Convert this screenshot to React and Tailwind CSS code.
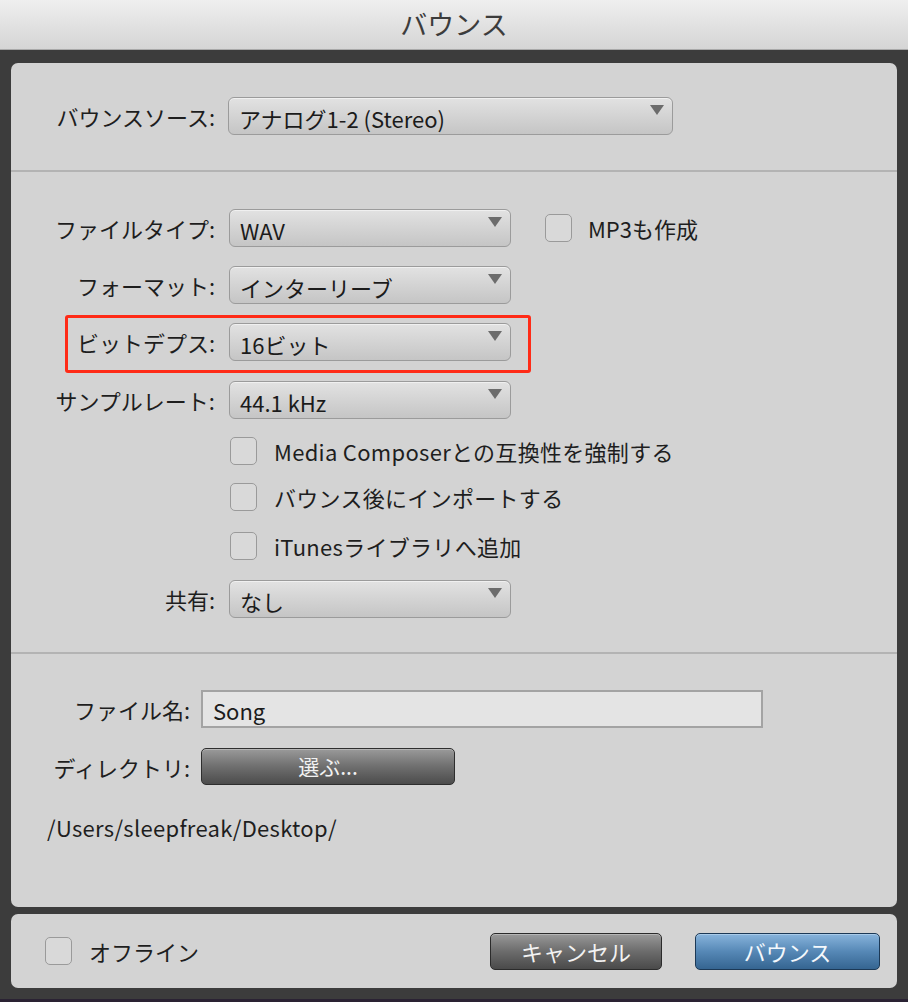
import React from "react";

function Arrow() {
  return (
    <svg width="14" height="10" viewBox="0 0 14 10" className="absolute right-[8px] top-[7px]">
      <path d="M0 0 H14 L7 10 Z" fill="#6c6c6c" />
    </svg>
  );
}

function Select({ value, width }) {
  return (
    <div
      className={`relative flex h-[38px] items-center rounded-[6px] border border-[#9b9b9b] bg-gradient-to-b from-[#e2e2e2] to-[#c5c5c5] pl-[10px] pt-[3px] text-[22px] leading-[28px] text-[#1b1b1b] shadow-[inset_0_1px_0_#f0f0f0] ${width}`}
    >
      {value}
      <Arrow />
    </div>
  );
}

function Checkbox() {
  return <div className="h-[28px] w-[27px] shrink-0 rounded-[5px] border-[1.5px] border-[#9a9a9a] bg-[#d9d9d9]" />;
}

function Row({ label, children, labelWidth = "w-[204px]", gap = "gap-[14px]" }) {
  return (
    <div className={`flex items-center ${gap}`}>
      <div className={`${labelWidth} shrink-0 text-right text-[22px] leading-[28px] text-[#1e1e1e]`}>{label}</div>
      {children}
    </div>
  );
}

function CheckRow({ label, className }) {
  return (
    <div className={`flex items-center gap-[17px] pl-[219px] ${className}`}>
      <Checkbox />
      <span className="text-[22px] leading-[28px] tracking-[0.3px] text-[#1e1e1e]">{label}</span>
    </div>
  );
}

export default function App() {
  return (
    <div className="flex h-[1002px] w-[908px] flex-col bg-[#3c3c3c] font-['Noto_Sans_CJK_JP',sans-serif]">
      {/* title bar */}
      <div className="flex h-[50px] shrink-0 items-center justify-center border-b border-[#a9a9a9] bg-gradient-to-b from-[#efefef] to-[#d5d5d5] text-[27px] text-[#3c3c3c]">
        バウンス
      </div>

      {/* main panel */}
      <div className="mx-[11px] mt-[13px] flex h-[844px] flex-col rounded-[7px] bg-[#d3d3d3]">
        <div className="pb-[35px] pt-[34px]">
          <Row label="バウンスソース:" gap="gap-[13px]">
            <Select value="アナログ1-2 (Stereo)" width="w-[445px]" />
          </Row>
        </div>
        <div className="h-[2px] bg-[#b3b3b3]" />

        <div className="flex flex-col pb-[34px] pt-[37px]">
          <Row label="ファイルタイプ:">
            <Select value="WAV" width="w-[282px]" />
            <div className="ml-[20px] flex items-center gap-[16px]">
              <Checkbox />
              <span className="text-[22px] leading-[28px] text-[#1e1e1e]">MP3も作成</span>
            </div>
          </Row>
          <div className="mt-[19px]">
            <Row label="フォーマット:">
              <Select value="インターリーブ" width="w-[282px]" />
            </Row>
          </div>
          <div className="relative mt-[19px]">
            <Row label="ビットデプス:">
              <Select value="16ビット" width="w-[282px]" />
            </Row>
            <div className="pointer-events-none absolute left-[54px] top-[-8px] h-[58px] w-[466px] rounded-[3px] border-[3px] border-[#ff2b17]" />
          </div>
          <div className="mt-[20px]">
            <Row label="サンプルレート:">
              <Select value="44.1 kHz" width="w-[282px]" />
            </Row>
          </div>
          <CheckRow label="Media Composerとの互換性を強制する" className="mt-[18px]" />
          <CheckRow label="バウンス後にインポートする" className="mt-[18px]" />
          <CheckRow label="iTunesライブラリへ追加" className="mt-[21px]" />
          <div className="mt-[20px]">
            <Row label="共有:">
              <Select value="なし" width="w-[282px]" />
            </Row>
          </div>
        </div>
        <div className="h-[2px] bg-[#b3b3b3]" />

        <div className="flex flex-col pt-[36px]">
          <Row label="ファイル名:" labelWidth="w-[179px]" gap="gap-[11px]">
            <div className="flex h-[38px] w-[562px] items-center border-2 border-[#a3a3a3] bg-[#e4e4e4] pl-[10px] pt-[2px] text-[22px] leading-[28px] text-[#1b1b1b]">
              Song
            </div>
          </Row>
          <div className="mt-[20px]">
            <Row label="ディレクトリ:" labelWidth="w-[179px]" gap="gap-[11px]">
              <button className="flex h-[37px] w-[254px] items-center justify-center rounded-[5px] border border-[#2e2e2e] bg-gradient-to-b from-[#9a9a9a] via-[#6f6f6f] to-[#4c4c4c] text-[21px] text-[#f2f2f2] shadow-[inset_0_1px_0_#b5b5b5]">
                選ぶ...
              </button>
            </Row>
          </div>
          <div className="mt-[28px] pl-[36px] text-[22px] leading-[28px] tracking-[0.3px] text-[#1e1e1e]">/Users/sleepfreak/Desktop/</div>
        </div>
      </div>

      {/* bottom panel */}
      <div className="mx-[11px] mt-[7px] flex h-[74px] items-center rounded-[7px] bg-[#d3d3d3] pl-[34px] pr-[17px]">
        <Checkbox />
        <span className="ml-[17px] text-[22px] leading-[28px] text-[#1e1e1e]">オフライン</span>
        <div className="ml-auto flex gap-[33px]">
          <button className="flex h-[37px] w-[172px] items-center justify-center rounded-[5px] border border-[#2b2b2b] bg-gradient-to-b from-[#999999] via-[#6c6c6c] to-[#4a4a4a] text-[22px] text-[#f2f2f2] shadow-[inset_0_1px_0_#b5b5b5]">
            キャンセル
          </button>
          <button className="flex h-[37px] w-[185px] items-center justify-center rounded-[5px] border border-[#1c3956] bg-gradient-to-b from-[#88b4dc] via-[#5688b6] to-[#356591] text-[22px] text-[#f4f8fc] shadow-[inset_0_1px_0_#a9cbe9]">
            バウンス
          </button>
        </div>
      </div>
      <div className="mt-auto h-[3px] bg-[#2a2233]" />
    </div>
  );
}
